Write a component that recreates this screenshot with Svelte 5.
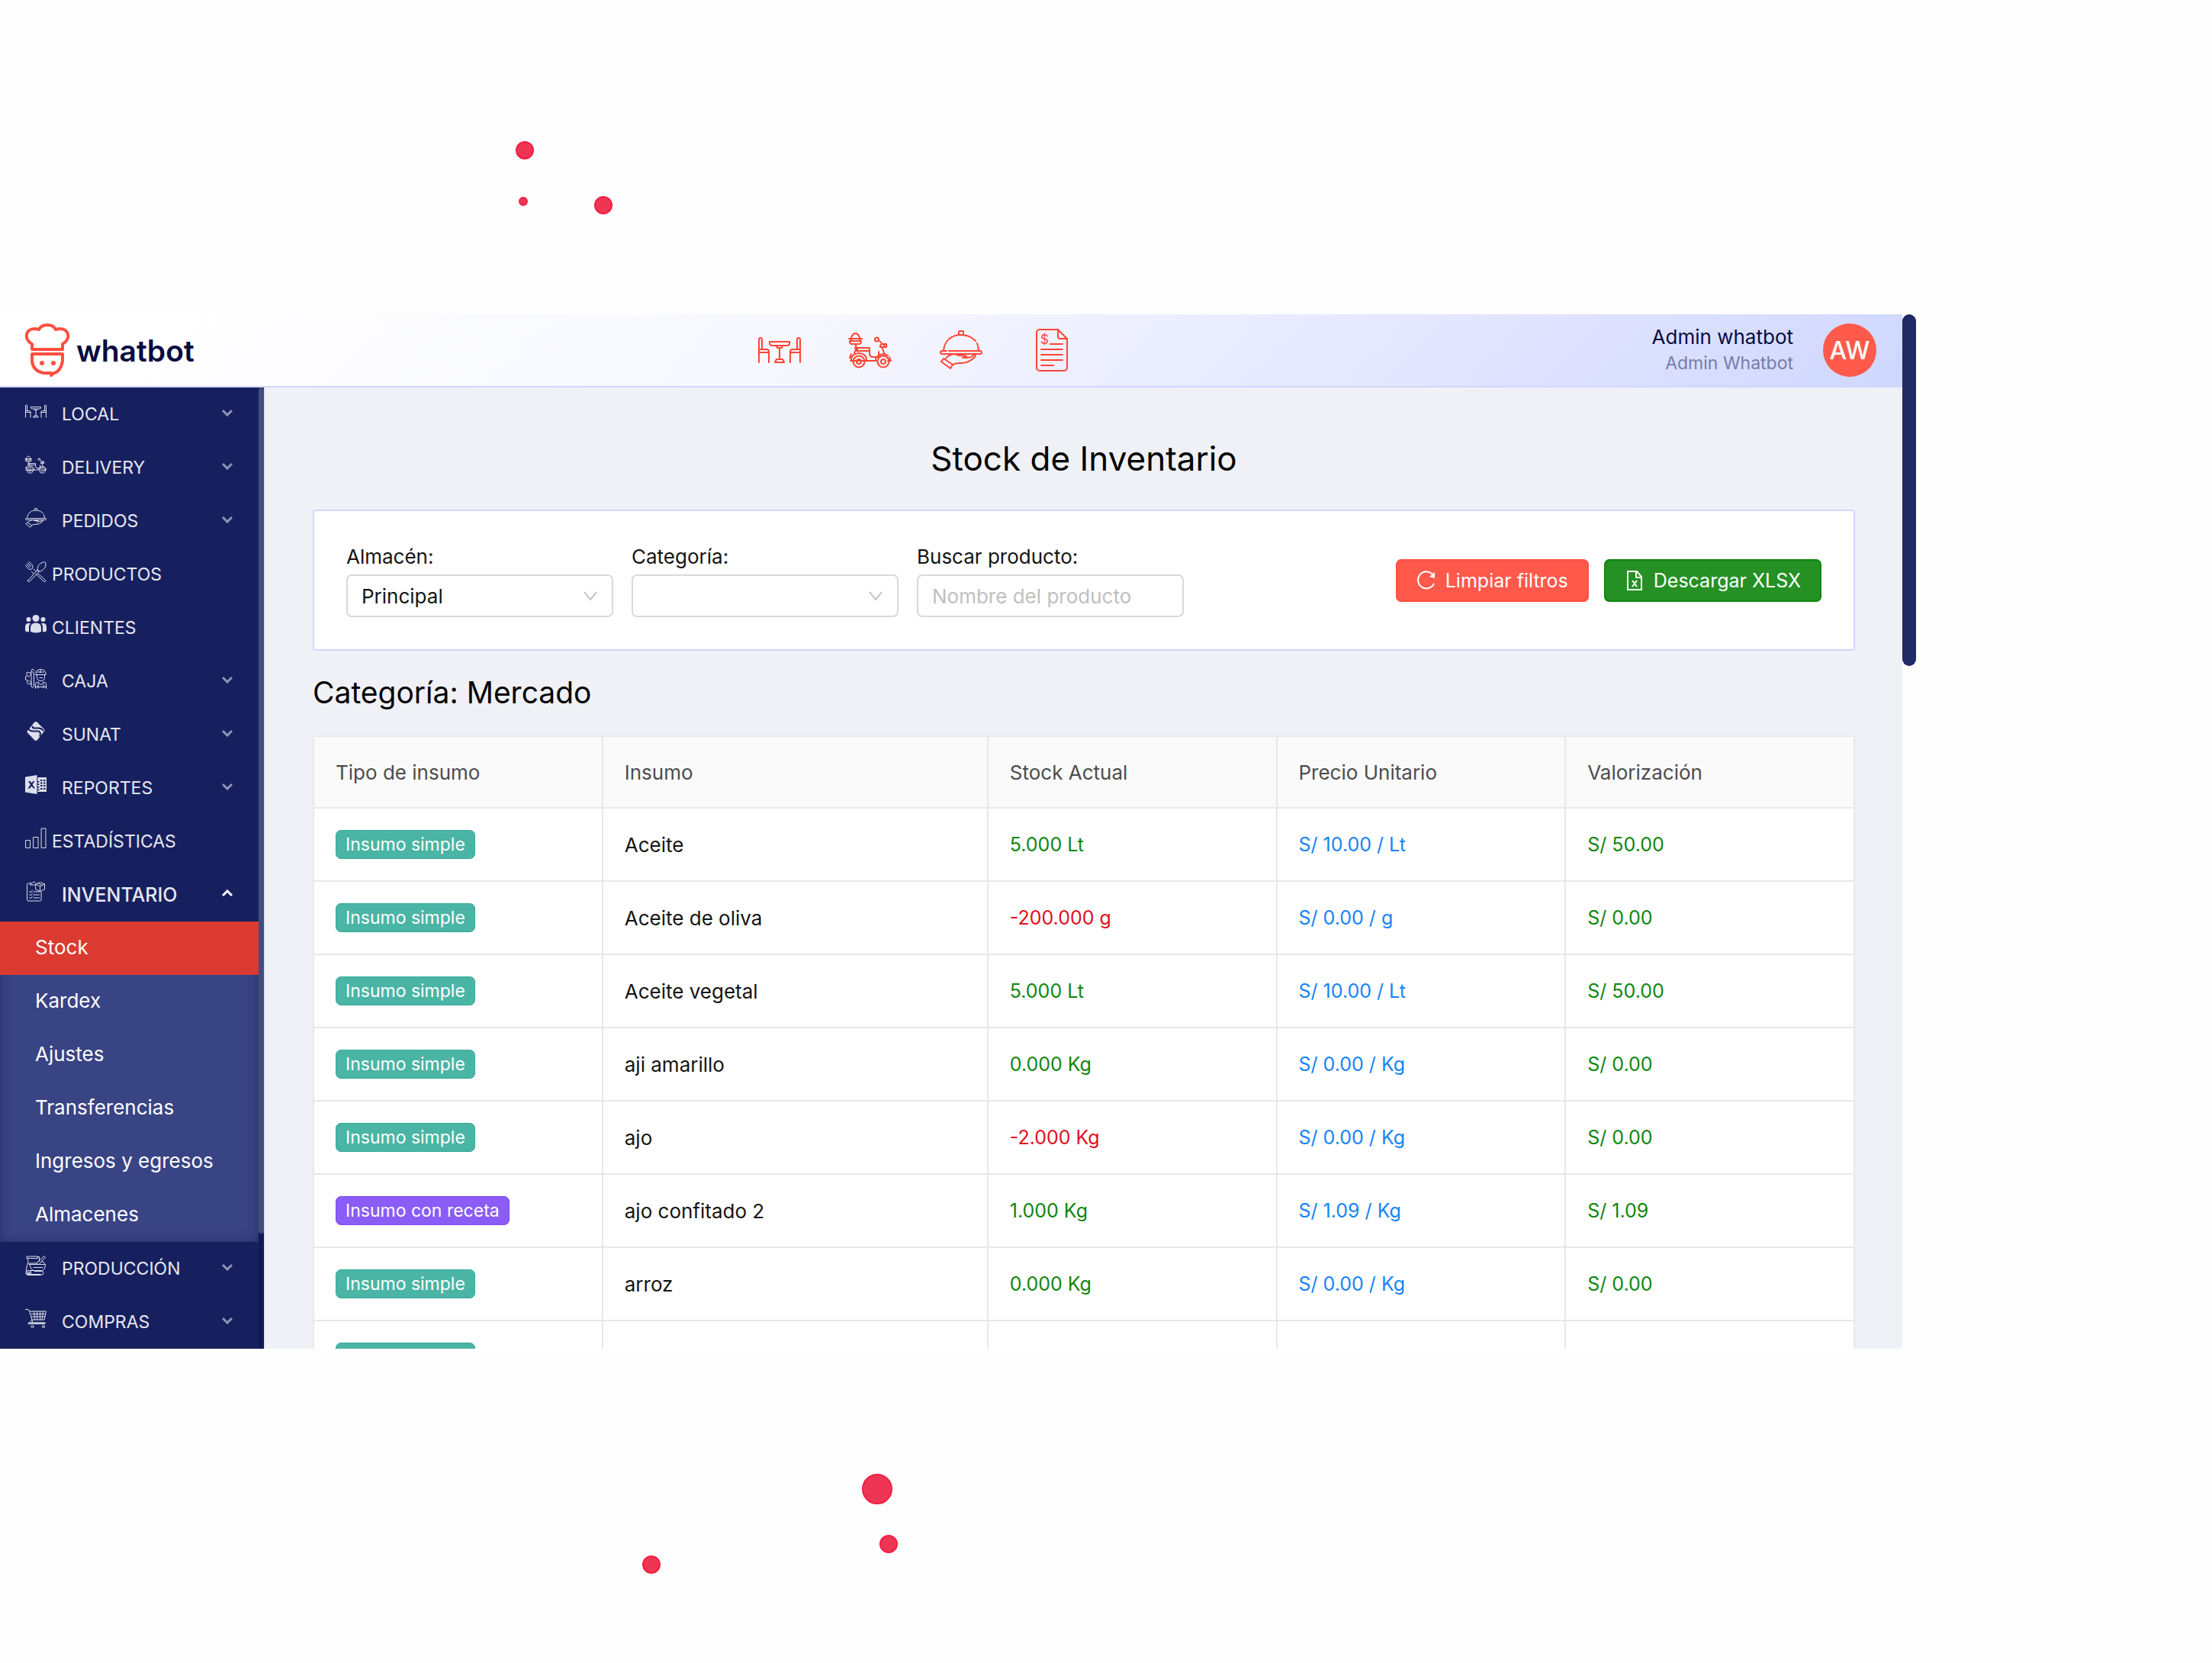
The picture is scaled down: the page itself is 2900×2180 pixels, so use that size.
<script lang="ts">
	type MenuItem = { label: string; icon: string; expandable?: boolean; children?: string[] };

	const menu: MenuItem[] = [
		{ label: 'LOCAL', icon: 'table', expandable: true },
		{ label: 'DELIVERY', icon: 'scooter', expandable: true },
		{ label: 'PEDIDOS', icon: 'dish', expandable: true },
		{ label: 'PRODUCTOS', icon: 'cutlery' },
		{ label: 'CLIENTES', icon: 'people' },
		{ label: 'CAJA', icon: 'cashier', expandable: true },
		{ label: 'SUNAT', icon: 'sunat', expandable: true },
		{ label: 'REPORTES', icon: 'excel', expandable: true },
		{ label: 'ESTADÍSTICAS', icon: 'bars' },
		{
			label: 'INVENTARIO',
			icon: 'clipboard',
			expandable: true,
			children: ['Stock', 'Kardex', 'Ajustes', 'Transferencias', 'Ingresos y egresos', 'Almacenes']
		},
		{ label: 'PRODUCCIÓN', icon: 'mixing', expandable: true },
		{ label: 'COMPRAS', icon: 'cart', expandable: true }
	];

	const shortcuts = [
		{ icon: 'table', label: 'Local' },
		{ icon: 'scooter', label: 'Delivery' },
		{ icon: 'dish', label: 'Pedidos' },
		{ icon: 'invoice', label: 'Comprobantes' }
	];

	const rows = [
		{ recipe: false, name: 'Aceite', stock: '5.000 Lt', price: 'S/ 10.00 / Lt', total: 'S/ 50.00' },
		{ recipe: false, name: 'Aceite de oliva', stock: '-200.000 g', price: 'S/ 0.00 / g', total: 'S/ 0.00' },
		{ recipe: false, name: 'Aceite vegetal', stock: '5.000 Lt', price: 'S/ 10.00 / Lt', total: 'S/ 50.00' },
		{ recipe: false, name: 'aji amarillo', stock: '0.000 Kg', price: 'S/ 0.00 / Kg', total: 'S/ 0.00' },
		{ recipe: false, name: 'ajo', stock: '-2.000 Kg', price: 'S/ 0.00 / Kg', total: 'S/ 0.00' },
		{ recipe: true, name: 'ajo confitado 2', stock: '1.000 Kg', price: 'S/ 1.09 / Kg', total: 'S/ 1.09' },
		{ recipe: false, name: 'arroz', stock: '0.000 Kg', price: 'S/ 0.00 / Kg', total: 'S/ 0.00' },
		{ recipe: false, name: 'azucar', stock: '0.000 Kg', price: 'S/ 0.00 / Kg', total: 'S/ 0.00' }
	];

	let active = $state('Stock');
	let warehouse = $state('Principal');
	let category = $state('');
	let search = $state('');

	function clearFilters() {
		category = '';
		search = '';
	}
</script>

{#snippet icon(name: string)}
	<svg class="icon" viewBox="0 0 56 56" aria-hidden="true">
		{#if name === 'table'}
			<path d="M1 44V14a2 2 0 0 1 4 0v13h6a3 3 0 0 1 3 3v14M1 31h13M5 27H1" />
			<path d="M55 44V14a2 2 0 0 0-4 0v13h-6a3 3 0 0 0-3 3v14M55 31H42M51 27h4" />
			<path d="M15 17h26v3l-2 2H17l-2-2zM24 22l1 3h6l1-3M28 25v15M24 40h8l2 4H22z" />
		{:else if name === 'scooter'}
			<path d="M3 16v-3c0-4 3-7 5.500-7s5.500 3 5.500 7v3M0 13h17M1 16h15v2l-2 2H3l-2-2zM9 20v3l2 2v3" />
			<path d="M8 25h19v4H10zM8 29l-1 3M27 29v4q0 4 5 4h7V30" />
			<path d="M3 42v-2a10 8 0 0 1 20 0v2zM1 38l2-5M3 42H2M23 42h13M35 42a10 8 0 0 1 16-7M53 37l2 5h-4" />
			<circle cx="13" cy="43" r="7.500" /><circle cx="13" cy="43" r="3" />
			<circle cx="45" cy="43" r="7.500" /><circle cx="45" cy="43" r="3" />
			<circle cx="36.500" cy="14" r="2.500" />
			<path d="M39 15q3 2 4 5M41 24v-2l2-2h6v4zM43 24l4 10M46 20v4" />
		{:else if name === 'dish'}
			<path d="M25 7V4q0-1 1-1h4q1 0 1 1v3M5 29C6 16 15 8 28 8q12 0 19 8M49 19q2 5 2 10" />
			<path d="M9 29H3a2 2 0 0 0 0 4h50a2 2 0 0 0 0-4H12" />
			<path d="M7 40q5-7 13-7 4 3 10 2l5 1q-1 2-5 2M34 38q8 0 11-4 3 0 1 3-9 9-20 8-5 0-9 2M2 43l3-4 12 8-3 5z" />
		{:else if name === 'invoice'}
			<path d="M36 1H12a4 4 0 0 0-4 4v46a4 4 0 0 0 4 4h32a4 4 0 0 0 4-4V13zM36 1v9q0 3 3 3h9" />
			<path d="M26 20h16M14 27h28M14 34h28M14 41h28M14 48h16" />
			<text x="13" y="20">$</text>
		{:else if name === 'cutlery'}
			<path d="M7 52 33 24l4 4-26 27q-4 1-4-3zM32 25q-1-14 12-20 10-4 10 3 1 13-14 20zM22 22l6 6M34 34l19 17q2 4-2 4l-3-1-18-18M17 29l6 6" />
			<path d="M10 3l9 9q3 6-2 10-6 3-9-1L1 12M7 6l8 9M4 9l8 9" />
		{:else if name === 'people'}
			<g class="solid">
				<circle cx="28" cy="11" r="9" /><circle cx="9" cy="14" r="6" /><circle cx="47" cy="14" r="6" />
				<path d="M14 46V36q0-13 14-13t14 13v10q-14 6-28 0zM11 24q-11-1-11 10v10q4 3 10 3V35q0-7 4-10zM45 24q11-1 11 10v10q-4 3-10 3V35q0-7-4-10z" />
			</g>
		{:else if name === 'cashier'}
			<path d="M28 15q-1-9 12-10 13 0 14 11v3H28zM40 5v9M31 12h18M31 19v6q0 10 10 10t10-10v-6M38 27h7M27 55V43q0-4 7-5l7 8 7-8q7 1 7 5v12M34 43v11M48 43v11M27 51h28" />
			<path d="M24 8l-4-4-4 3 1 5-6 2-6-2-2 5 4 5-6 2v8l6 2-2 6 4 4 6-2 3 4M16 14v36q3 6 7 0V16q0-5-5-5M9 25l6-8M10 34l6 6" />
		{:else if name === 'sunat'}
			<path class="solid" d="M28 2q2 0 4 2l18 18q2 3 0 5L32 50q-4 4-8 0L6 31q-2-3 0-5L24 4q2-2 4-2z" />
			<path class="groove" d="M9 21q4 7 13 6l12 0q8 1 5 13M19 15q1 5 8 4l8 0q8 0 12 6" />
		{:else if name === 'excel'}
			<g class="solid">
				<path fill-rule="evenodd" d="M0 7 31 2v50L0 47zM8 18l6 9-7 10h5l5-6 5 6h4l-7-10 6-9h-4l-4 5-4-5z" />
				<path fill-rule="evenodd" d="M33 8h23v38H33v-4h4v-3h-4v-4h4v-3h-4v-4h4v-3h-4v-4h4v-3h-4zM40 14v4h5v-4zM48 14v4h5v-4zM40 21v4h5v-4zM48 21v4h5v-4zM40 28v4h5v-4zM48 28v4h5v-4zM40 36v4h5v-4zM48 36v4h5v-4z" />
			</g>
		{:else if name === 'bars'}
			<path d="M2 33h11v20H2zM22 25h12v28H22zM43 2h11v51H43z" />
		{:else if name === 'clipboard'}
			<path d="M14 6H8q-3 0-3 3v40q0 3 3 3h31q3 0 3-3V29M14 10V5h5q2-5 7-2M13 10h14M28 8 39 3l12 5v14l-12 5-11-5zM28 8l11 6 12-6M39 14v13M33 5l12 6M22 28h15M22 36h15M22 44h15M11 27l3 3 5-6M11 35l3 3 5-6M11 43l3 3 5-6" />
		{:else if name === 'mixing'}
			<path d="M5 4h28v5H5zM6 9q5 8-1 18-4 10-1 24h36M33 5h4v12M12 25h41q0 14-11 18H25Q13 38 12 25zM10 25v-3h22M29 22 50 3l3 3-16 18M42 18q8-2 9 6M22 33h24" />
			<path d="M7 41h33q8 0 8 6t-8 6H7q-5-1-5-6t5-6zM15 41v12M7 45h5v4H7z" />
		{:else if name === 'cart'}
			<path d="M1 3h5q4 0 5 4l9 31h32M10 7l2 1h43l-5 22H18M16 15h37M17 22h35M23 8l3 22M31 8l1 22M39 8v22M47 8l-3 22M18 30q-8 7-3 8h3M9 38h43v3H9z" />
			<circle cx="19" cy="48" r="3" /><circle cx="48" cy="48" r="3" />
		{/if}
	</svg>
{/snippet}

<div class="page">
	<svg class="bubbles" aria-hidden="true">
		<circle cx="688" cy="197" r="11" />
		<circle cx="686" cy="264" r="5" />
		<circle cx="791" cy="269" r="11" />
	</svg>

	<div class="window">
		<div class="app">
			<header class="topbar">
				<a class="brand" href="#inicio">
					<svg class="brand-mark" viewBox="0 0 58 72" aria-hidden="true">
						<path d="M9 35V28C-2 22 0 8 12 8q3 0 6 1 3-6 11-6t11 6q3-1 6-1c12 0 14 14 3 20v7zM9 41h40v9Q47 64 36 67l-2 2v-3H24Q10 63 9 50z" />
						<circle cx="22" cy="53" r="3" /><circle cx="37" cy="53" r="3" />
					</svg>
					<span>whatbot</span>
				</a>
				<nav class="shortcuts" aria-label="Accesos">
					{#each shortcuts as s}
						<a href="#{s.icon}" aria-label={s.label}>{@render icon(s.icon)}</a>
					{/each}
				</nav>
				<div class="user">
					<div class="user-text">
						<span class="user-name">Admin whatbot</span>
						<span class="user-role">Admin Whatbot</span>
					</div>
					<div class="avatar">AW</div>
				</div>
			</header>

			<div class="body">
				<aside class="sidebar">
					<nav class="menu" aria-label="Principal">
						{#each menu as item}
							<button class="menu-item" class:open={item.children}>
								{@render icon(item.icon)}
								<span class="menu-label" class:spaced={item.expandable}>{item.label}</span>
								{#if item.expandable}
									<svg class="caret" viewBox="0 0 14 10" aria-hidden="true">
										<path d={item.children ? 'M1 8l6-6 6 6' : 'M1 2l6 6 6-6'} />
									</svg>
								{/if}
							</button>
							{#if item.children}
								<div class="submenu">
									{#each item.children as child}
										<a href="#{child}" class:active={child === active} onclick={() => (active = child)}>{child}</a>
									{/each}
								</div>
							{/if}
						{/each}
					</nav>
					<div class="side-track"><div class="side-thumb"></div></div>
				</aside>

				<main class="content">
					<h1>Stock de Inventario</h1>

					<section class="filters">
						<div class="field">
							<label for="warehouse">Almacén:</label>
							<div class="select">
								<select id="warehouse" bind:value={warehouse}>
									<option>Principal</option>
								</select>
								<svg viewBox="0 0 18 13" aria-hidden="true"><path d="M1 1l8 10 8-10" /></svg>
							</div>
						</div>
						<div class="field">
							<label for="category">Categoría:</label>
							<div class="select">
								<select id="category" bind:value={category}>
									<option value=""></option>
									<option>Mercado</option>
								</select>
								<svg viewBox="0 0 18 13" aria-hidden="true"><path d="M1 1l8 10 8-10" /></svg>
							</div>
						</div>
						<div class="field">
							<label for="search">Buscar producto:</label>
							<input id="search" type="text" placeholder="Nombre del producto" bind:value={search} />
						</div>
						<div class="actions">
							<button class="btn red" onclick={clearFilters}>
								<svg viewBox="0 0 26 26" aria-hidden="true">
									<path d="M22 6a11 11 0 1 0 1 11" /><path class="tip" d="M24 2v8l-7-2z" />
								</svg>
								Limpiar filtros
							</button>
							<button class="btn green">
								<svg viewBox="0 0 26 26" aria-hidden="true">
									<path d="M4 1h12l6 7v17H4zM15 1v8h7M10 13l6 8M16 13l-6 8" />
								</svg>
								Descargar XLSX
							</button>
						</div>
					</section>

					<h2>Categoría: Mercado</h2>

					<table>
						<colgroup>
							<col class="narrow" /><col class="wide" /><col class="narrow" /><col class="narrow" /><col class="narrow" />
						</colgroup>
						<thead>
							<tr>
								<th>Tipo de insumo</th>
								<th>Insumo</th>
								<th>Stock Actual</th>
								<th>Precio Unitario</th>
								<th>Valorización</th>
							</tr>
						</thead>
						<tbody>
							{#each rows as row}
								<tr>
									<td><span class="tag" class:recipe={row.recipe}>{row.recipe ? 'Insumo con receta' : 'Insumo simple'}</span></td>
									<td class="name">{row.name}</td>
									<td class={row.stock.startsWith('-') ? 'negative' : 'positive'}>{row.stock}</td>
									<td class="price">{row.price}</td>
									<td class="positive">{row.total}</td>
								</tr>
							{/each}
						</tbody>
					</table>
				</main>
			</div>
		</div>
		<div class="page-thumb"></div>
	</div>

	<svg class="bubbles" aria-hidden="true">
		<circle cx="1150" cy="184" r="19" />
		<circle cx="1165" cy="256" r="11" />
		<circle cx="854" cy="283" r="11" />
	</svg>
</div>

<style>
	:global(body) {
		margin: 0;
		background: #fefefe;
	}

	.page {
		height: 100vh;
		display: flex;
		flex-direction: column;
		font-family: Inter, sans-serif;
		font-size: 25px;
		color: #141414;
	}

	.page * {
		box-sizing: border-box;
	}

	button, input, select {
		font: inherit;
	}

	a {
		color: inherit;
		text-decoration: none;
	}

	.bubbles {
		display: block;
		width: 100%;
		height: 412px;
		flex-shrink: 0;
	}

	.bubbles circle {
		fill: #ee3654;
		stroke: #f01e44;
		stroke-width: 2;
	}

	.window {
		flex: 1;
		min-height: 0;
		display: flex;
	}

	.app {
		width: 86%;
		display: flex;
		flex-direction: column;
		overflow: hidden;
	}

	.page-thumb {
		width: 18px;
		height: 34%;
		border-radius: 9px;
		background: #1f2963;
	}

	/* Icons */
	.icon {
		display: block;
		width: 28px;
		height: 28px;
		flex-shrink: 0;
		fill: none;
		stroke: currentColor;
		stroke-width: 2;
		stroke-linejoin: round;
		stroke-linecap: round;
		overflow: visible;
	}

	.icon .solid {
		fill: currentColor;
		stroke: none;
	}

	.icon .groove {
		stroke: #17205f;
		stroke-width: 4;
	}

	.icon text {
		font-size: 17px;
		fill: currentColor;
		stroke: none;
	}

	/* Top bar */
	.topbar {
		height: 96px;
		flex-shrink: 0;
		display: flex;
		align-items: center;
		justify-content: space-between;
		padding: 0 34px 0 33px;
		border-bottom: 2px solid #d0d7ff;
		background: linear-gradient(135deg, #fff 8%, #f5f6ff 45%, #dfe3ff 80%, #cfd7ff 100%);
	}

	.brand {
		display: flex;
		align-items: center;
		gap: 9px;
		color: #070b40;
		font-size: 39px;
		font-weight: 600;
	}

	.brand-mark {
		width: 58px;
		height: 72px;
		fill: none;
		stroke: #ff4f40;
		stroke-width: 4;
		stroke-linejoin: round;
	}

	.brand-mark circle {
		fill: #ff4f40;
		stroke: none;
	}

	.shortcuts {
		display: flex;
		gap: 63px;
		margin-right: 20px;
		color: #ff4536;
	}

	.shortcuts .icon {
		width: 56px;
		height: 56px;
	}

	.user {
		display: flex;
		align-items: center;
		gap: 39px;
	}

	.user-text {
		display: flex;
		flex-direction: column;
		text-align: right;
		line-height: 34px;
	}

	.user-name {
		font-size: 26px;
		color: #070b40;
	}

	.user-role {
		font-size: 23px;
		color: #747cab;
	}

	.avatar {
		width: 70px;
		height: 70px;
		border-radius: 50%;
		background: #ff5a4b;
		color: #fff;
		font-size: 32px;
		font-weight: 500;
		display: flex;
		align-items: center;
		justify-content: center;
	}

	.body {
		flex: 1;
		min-height: 0;
		display: flex;
	}

	/* Sidebar */
	.sidebar {
		width: 347px;
		flex-shrink: 0;
		display: flex;
		background: #17205f;
		border-right: 1px solid #d0d7ff;
	}

	.menu {
		flex: 1;
		overflow: hidden;
	}

	.menu-item {
		width: 100%;
		height: 70px;
		display: flex;
		align-items: center;
		padding: 0 34px 0 33px;
		border: 0;
		background: none;
		color: #e6e7f0;
		font-size: 23px;
		text-align: left;
	}

	.menu-item .icon {
		margin-bottom: 8px;
		color: #dcdeea;
	}

	.menu-item.open {
		font-size: 25px;
		font-weight: 500;
	}

	.menu-label {
		flex: 1;
		margin-left: 7px;
	}

	.menu-label.spaced {
		margin-left: 20px;
	}

	.caret {
		width: 14px;
		height: 10px;
		margin-bottom: 4px;
		fill: none;
		stroke: #8f94b5;
		stroke-width: 3;
	}

	.open .caret {
		stroke: #fff;
	}

	.submenu {
		background: #394485;
		box-shadow: inset 0 0 14px #262e66;
	}

	.submenu a {
		display: block;
		height: 70px;
		padding-left: 46px;
		font-size: 26px;
		line-height: 68px;
		color: #fff;
	}

	.submenu a.active {
		background: #da3a2f;
	}

	.side-track {
		width: 7px;
		background: #131a52;
	}

	.side-thumb {
		height: 88%;
		border-radius: 4px;
		background: #474d7a;
	}

	/* Content */
	.content {
		flex: 1;
		padding: 0 62px 0 63px;
		background: #f0f1f6;
	}

	h1 {
		margin: 63px 0 37px;
		font-size: 44px;
		line-height: 60px;
		font-weight: 400;
		text-align: center;
		color: #000;
	}

	h2 {
		margin: 30px 0 31px;
		font-size: 39px;
		line-height: 50px;
		font-weight: 400;
		color: #000;
	}

	.filters {
		display: flex;
		align-items: center;
		gap: 24px;
		padding: 42px;
		border: 2px solid #d0d7ff;
		border-radius: 4px;
		background: #fff;
	}

	.field {
		width: 350px;
		display: flex;
		flex-direction: column;
		gap: 5px;
		font-size: 26px;
	}

	.field label {
		line-height: 36px;
	}

	.field input, .field select {
		width: 100%;
		height: 56px;
		padding: 0 18px;
		border: 2px solid #d9d9d9;
		border-radius: 7px;
		background: #fff;
		color: #141414;
	}

	.field input::placeholder {
		color: #bfbfbf;
	}

	.select {
		display: grid;
		align-items: center;
	}

	.select select, .select svg {
		grid-area: 1 / 1;
	}

	.select select {
		appearance: none;
	}

	.select svg {
		width: 18px;
		height: 13px;
		margin-right: 21px;
		justify-self: end;
		fill: none;
		stroke: #bfbfbf;
		stroke-width: 2;
		pointer-events: none;
	}

	.actions {
		margin-left: auto;
		display: flex;
		gap: 20px;
	}

	.btn {
		height: 56px;
		display: flex;
		align-items: center;
		gap: 12px;
		padding: 0 25px;
		border: 2px solid;
		border-radius: 7px;
		color: #fff;
		white-space: nowrap;
		box-shadow: 0 3px 0 rgba(0, 0, 0, 0.04);
	}

	.btn svg {
		width: 26px;
		height: 26px;
		fill: none;
		stroke: #fff;
		stroke-width: 2;
	}

	.btn .tip {
		fill: #fff;
		stroke: none;
	}

	.btn.red {
		background: #ff594b;
		border-color: #ff5041;
	}

	.btn.green {
		background: #259125;
		border-color: #0f860f;
	}

	/* Stock table */
	table {
		width: 100%;
		table-layout: fixed;
		border-collapse: separate;
		border-spacing: 0;
		border-top: 2px solid #e8e8e8;
		border-left: 2px solid #e8e8e8;
		border-radius: 4px 4px 0 0;
		background: #fff;
	}

	.narrow {
		width: 18.75%;
	}

	.wide {
		width: 25%;
	}

	th, td {
		height: 96px;
		padding: 0 28px;
		border-right: 2px solid #e8e8e8;
		border-bottom: 2px solid #e8e8e8;
		text-align: left;
		font-weight: 400;
	}

	th {
		height: 94px;
		background: #fafafa;
		color: #4c4c4c;
	}

	th, .name {
		font-size: 26px;
	}

	.tag {
		display: inline-block;
		padding: 0 12px;
		border: 1px solid #35aa97;
		border-radius: 7px;
		background: #4ab5a5;
		color: #fff;
		font-size: 23px;
		line-height: 36px;
		vertical-align: middle;
	}

	.tag.recipe {
		background: #8b5cf6;
		border-color: #7c4af0;
	}

	.positive {
		color: #0f870f;
	}

	.negative {
		color: #e0101c;
	}

	.price {
		color: #1684f5;
	}
</style>
